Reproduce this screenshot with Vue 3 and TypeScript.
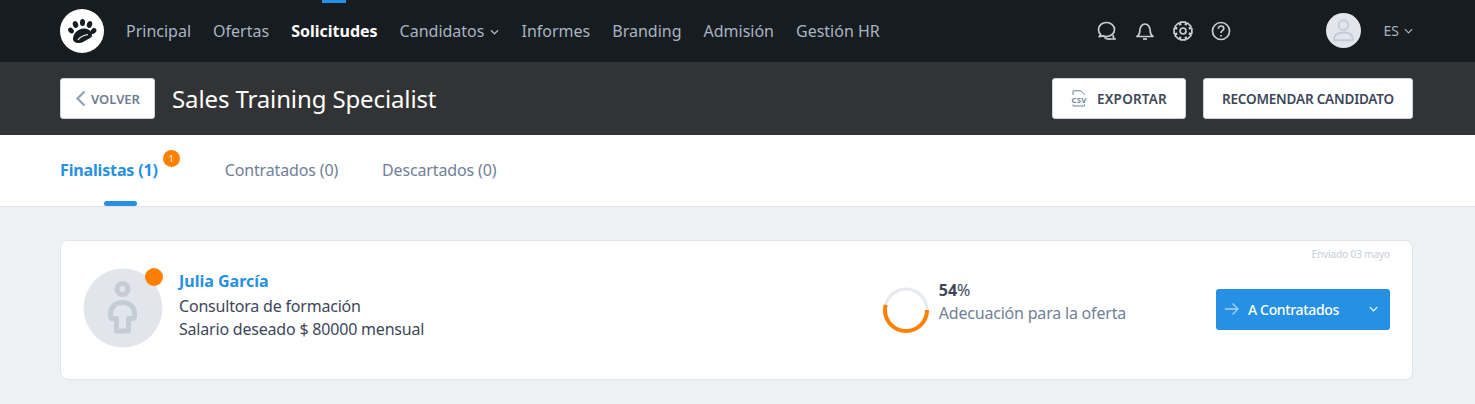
<script setup lang="ts">
const navItems = [
  { label: 'Principal' },
  { label: 'Ofertas' },
  { label: 'Solicitudes', active: true },
  { label: 'Candidatos', caret: true },
  { label: 'Informes' },
  { label: 'Branding' },
  { label: 'Admisión' },
  { label: 'Gestión HR' },
]

const tabs = [
  { label: 'Finalistas (1)', active: true, badge: 1 },
  { label: 'Contratados (0)' },
  { label: 'Descartados (0)' },
]

// eight-tooth gear outline for the settings icon
const gearPath = (() => {
  const pts: string[] = []
  for (let i = 0; i < 8; i++) {
    const a = (i * Math.PI) / 4 - Math.PI / 8
    const steps: [number, number][] = [
      [7.1, a - 0.07],
      [9.2, a + 0.12],
      [9.2, a + 0.66],
      [7.1, a + 0.85],
    ]
    for (const [r, t] of steps) {
      pts.push(`${(10 + r * Math.cos(t)).toFixed(2)} ${(10 + r * Math.sin(t)).toFixed(2)}`)
    }
  }
  return 'M' + pts.join('L') + 'z'
})()
</script>

<template>
  <div class="page">
    <header class="topbar">
      <div class="logo">
        <svg viewBox="0 0 44 44" width="44" height="44">
          <circle cx="22" cy="22" r="22" fill="#fff" />
          <g fill="#171c20">
            <ellipse cx="11" cy="21.500" rx="2.500" ry="3.200" transform="rotate(-40 11 21.500)" />
            <ellipse cx="15.500" cy="15.500" rx="2.600" ry="3.400" transform="rotate(-20 15.500 15.500)" />
            <ellipse cx="22.500" cy="13.500" rx="2.500" ry="3.600" />
            <ellipse cx="29.500" cy="15.500" rx="2.600" ry="3.400" transform="rotate(20 29.500 15.500)" />
            <ellipse cx="33.500" cy="22" rx="2.500" ry="3.200" transform="rotate(40 33.500 22)" />
            <path d="M13 30c0-5 4.500-10 10-10.500 5-.3 9 2.500 9 6.500 0 3-3 3.500-5.500 5-2.500 1.500-4 3-7.500 3-3.500 0-6-1.500-6-4z" />
          </g>
          <path d="M18 31c2-3 6-5 10-5.500" stroke="#fff" stroke-width="1.200" fill="none" />
        </svg>
      </div>
      <nav class="nav">
        <a v-for="item in navItems" :key="item.label" class="nav-item" :class="{ active: item.active }">
          {{ item.label }}
          <svg v-if="item.caret" class="caret" viewBox="0 0 10 6" width="9" height="6">
            <path d="M1 1l4 4 4-4" fill="none" stroke="currentColor" stroke-width="1.400" />
          </svg>
        </a>
      </nav>
      <div class="tools">
        <svg viewBox="0 0 20 20" width="20" height="20" class="tool">
          <path d="M9.500 1.500c-4.500 0-8 3-8 7 0 2 .8 3.700 2.200 5l-1.500 2.200 4-.8c1 .4 2.100.6 3.300.6 4.500 0 8-3.200 8-7s-3.500-7-8-7z" />
          <path d="M16 14l.8 4h2.200M7.500 16.500c1.500 1.300 4 1.800 6.500 1.500h5" />
        </svg>
        <svg viewBox="0 0 20 20" width="20" height="20" class="tool">
          <path d="M2 15.500c1.800-1.300 2.800-2.800 2.800-5.500 0-3.800 2.200-7 5.200-7s5.200 3.200 5.200 7c0 2.700 1 4.200 2.800 5.500z" />
          <path d="M8 18h4" />
        </svg>
        <svg viewBox="0 0 20 20" width="20" height="20" class="tool">
          <circle cx="10" cy="10" r="3" />
          <path :d="gearPath" />
        </svg>
        <svg viewBox="0 0 20 20" width="20" height="20" class="tool">
          <circle cx="10" cy="10" r="8.500" />
          <path d="M7.300 7.800c0-1.700 1.200-2.800 2.800-2.800s2.700 1 2.700 2.400c0 2.300-2.800 2.300-2.800 4.600" />
          <path d="M10 14v1.500" />
        </svg>
      </div>
      <div class="user">
        <svg viewBox="0 0 36 36" width="35" height="35">
          <circle cx="18" cy="18" r="18" fill="#e2e6ec" />
          <circle cx="18" cy="12.500" r="5" fill="none" stroke="#c4ccd6" stroke-width="2" />
          <path d="M8 28c0-6 4-8 10-8s10 2 10 8z" fill="none" stroke="#c4ccd6" stroke-width="2" stroke-linejoin="round" />
        </svg>
      </div>
      <div class="lang">
        ES
        <svg viewBox="0 0 10 6" width="9" height="6">
          <path d="M1 1l4 4 4-4" fill="none" stroke="currentColor" stroke-width="1.300" />
        </svg>
      </div>
    </header>

    <section class="subbar">
      <button class="btn back">
        <svg viewBox="0 0 11 17" width="11" height="17">
          <path d="M9.500 1.500L2.500 8.500l7 7" fill="none" stroke="#9aa5b4" stroke-width="2.400" />
        </svg>
        <span>VOLVER</span>
      </button>
      <h1 class="title">Sales Training Specialist</h1>
      <button class="btn export">
        <svg viewBox="0 0 16 17" width="16" height="17">
          <path d="M2 5V.8h8l3 3V5M2 14.500v1.500h11.500v-1.500" fill="none" stroke="#718096" stroke-width="1" />
          <text x="0.500" y="12.800" class="csv" textLength="15" lengthAdjust="spacingAndGlyphs">CSV</text>
        </svg>
        <span>EXPORTAR</span>
      </button>
      <button class="btn recommend">RECOMENDAR CANDIDATO</button>
    </section>

    <section class="tabs">
      <a v-for="tab in tabs" :key="tab.label" class="tab" :class="{ active: tab.active }">
        {{ tab.label }}
        <span v-if="tab.badge" class="tab-badge">{{ tab.badge }}</span>
      </a>
    </section>

    <main class="content">
      <article class="card">
        <span class="sent">Enviado 03 mayo</span>
        <div class="photo">
          <svg viewBox="0 0 80 80" width="80" height="80">
            <circle cx="40" cy="40" r="39.500" fill="#e2e6ec" />
            <circle cx="39.500" cy="21" r="5.500" fill="none" stroke="#c4ccd6" stroke-width="5" />
            <path d="M39.500 34.500c-7 0-12 4.500-12 11v2.500c0 1.500.5 2.500 2 2.500h4v12.500h12V50.500h4c1.500 0 2-1 2-2.500v-2.500c0-6.500-5-11-12-11z" fill="none" stroke="#c4ccd6" stroke-width="5" stroke-linejoin="round" />
          </svg>
          <span class="photo-dot"></span>
        </div>
        <div class="person">
          <a class="name">Julia García</a>
          <p>Consultora de formación</p>
          <p>Salario deseado $ 80000 mensual</p>
        </div>
        <div class="match">
          <svg viewBox="0 0 46 46" width="46" height="46">
            <circle cx="23" cy="23" r="21" fill="none" stroke="#e6e9ee" stroke-width="3" />
            <circle cx="23" cy="23" r="21" fill="none" stroke="#ff8000" stroke-width="4" pathLength="100" stroke-dasharray="54 100" />
          </svg>
          <div class="match-text">
            <div class="score"><b>54</b>%</div>
            <div class="score-label">Adecuación para la oferta</div>
          </div>
        </div>
        <button class="hire">
          <svg viewBox="0 0 16 14" width="16" height="14">
            <path d="M1 7h13M8.500 1.500L14 7l-5.500 5.500" fill="none" stroke="#a9d1f2" stroke-width="1.300" />
          </svg>
          <span class="hire-label">A Contratados</span>
          <svg viewBox="0 0 10 6" width="9" height="6">
            <path d="M1 1l4 4 4-4" fill="none" stroke="#fff" stroke-width="1.300" />
          </svg>
        </button>
      </article>
    </main>
  </div>
</template>

<style>
html,
body {
  margin: 0;
  background: #eef1f4;
}
</style>

<style scoped>
.page {
  font-family: "Noto Sans", "Open Sans", sans-serif;
  height: 404px;
  overflow: hidden;
  background: #eef1f4;
}

.topbar {
  height: 62px;
  box-sizing: border-box;
  background: #171c20;
  display: flex;
  align-items: center;
  padding: 0 62px 1px 60px;
}

.logo {
  display: flex;
  margin-right: 22px;
}

.nav {
  display: flex;
  gap: 22px;
  height: 100%;
}

.nav-item {
  position: relative;
  display: flex;
  align-items: center;
  gap: 6px;
  color: #a9b3c0;
  font-size: 16px;
}

.nav-item.active {
  color: #fff;
  font-weight: 700;
}

.nav-item.active::before {
  content: '';
  position: absolute;
  top: 0;
  left: 31px;
  width: 24px;
  height: 3px;
  background: #2590e4;
}

.caret {
  margin-top: 3px;
}

.tools {
  margin-left: auto;
  display: flex;
  gap: 18px;
  margin-right: 95px;
}

.tool {
  fill: none;
  stroke: #c9ced6;
  stroke-width: 1.700;
  stroke-linejoin: round;
}

.user {
  display: flex;
  margin-right: 23px;
}

.lang {
  display: flex;
  align-items: center;
  gap: 5px;
  color: #a9b3c0;
  font-size: 14px;
}

.subbar {
  height: 73px;
  background: #323335;
  display: flex;
  align-items: center;
  padding: 0 62px 0 60px;
}

.btn {
  height: 41px;
  box-sizing: border-box;
  background: #fff;
  border: 1px solid #cbd2dc;
  border-radius: 3px;
  display: flex;
  align-items: center;
  justify-content: center;
  font-family: inherit;
  font-weight: 600;
  font-size: 13.500px;
  color: #3d4759;
  padding: 0;
}

.back {
  width: 95px;
  gap: 5px;
  color: #6e7d92;
  font-size: 13px;
}

.title {
  margin: 0 auto 0 17px;
  font-size: 24px;
  font-weight: 400;
  color: #fff;
  letter-spacing: -0.12px;
}

.export {
  width: 134px;
  gap: 10px;
  margin-right: 17px;
  letter-spacing: 0.2px;
}

.csv {
  font-size: 7px;
  font-weight: 700;
  fill: #718096;
}

.recommend {
  width: 210px;
  letter-spacing: -0.2px;
}

.tabs {
  height: 72px;
  box-sizing: border-box;
  background: #fff;
  border-bottom: 1px solid #e2e6ec;
  display: flex;
  gap: 44px;
  padding-left: 60px;
}

.tab {
  position: relative;
  display: flex;
  align-items: center;
  box-sizing: border-box;
  height: 71px;
  padding-bottom: 1px;
  color: #718096;
  font-size: 16px;
  letter-spacing: -0.15px;
}

.tab.active {
  color: #2590e4;
  font-weight: 700;
  margin-right: 23px;
}

.tab.active::after {
  content: '';
  position: absolute;
  left: 44px;
  bottom: 0;
  width: 33px;
  height: 5px;
  border-radius: 3px;
  background: #2590e4;
}

.tab-badge {
  position: absolute;
  top: 15px;
  right: -22px;
  width: 17px;
  height: 17px;
  border-radius: 50%;
  background: #ff8000;
  color: #fff;
  font-size: 9px;
  font-weight: 400;
  display: flex;
  align-items: center;
  justify-content: center;
}

.content {
  padding: 33px 62px 0 60px;
}

.card {
  position: relative;
  height: 140px;
  box-sizing: border-box;
  background: #fff;
  border: 1px solid #e2e6ec;
  border-radius: 8px;
  display: flex;
  align-items: center;
  padding: 0 22px;
}

.sent {
  position: absolute;
  top: 6px;
  right: 22px;
  font-size: 10px;
  color: #c9ced6;
  letter-spacing: -0.1px;
}

.photo {
  position: relative;
  display: flex;
  margin-right: 16px;
  margin-bottom: 5px;
}

.photo-dot {
  position: absolute;
  top: 0;
  right: 0;
  width: 18px;
  height: 18px;
  border-radius: 50%;
  background: #ff8000;
}

.person {
  flex: 1;
  margin-bottom: 10px;
  font-size: 16px;
  line-height: 23px;
  color: #3d4759;
  letter-spacing: -0.2px;
}

.person p {
  margin: 0;
}

.name {
  display: block;
  margin-bottom: 2px;
  color: #2590e4;
  font-weight: 700;
  letter-spacing: 0;
}

.match {
  display: flex;
  align-items: center;
  gap: 10px;
  margin-right: 90px;
}

.match-text {
  margin-bottom: 18px;
}

.score {
  font-size: 16px;
  line-height: 24px;
  color: #3d4759;
}

.score-label {
  font-size: 16px;
  line-height: 22px;
  color: #718096;
  letter-spacing: -0.2px;
}

.hire {
  width: 174px;
  height: 41px;
  margin-bottom: 2px;
  border: 0;
  border-radius: 3px;
  background: #2590e4;
  color: #fff;
  display: flex;
  align-items: center;
  padding: 0 12px 0 8px;
  font-family: inherit;
  font-size: 14px;
  font-weight: 500;
  letter-spacing: -0.35px;
}

.hire-label {
  margin-left: 8px;
  margin-right: auto;
}
</style>
